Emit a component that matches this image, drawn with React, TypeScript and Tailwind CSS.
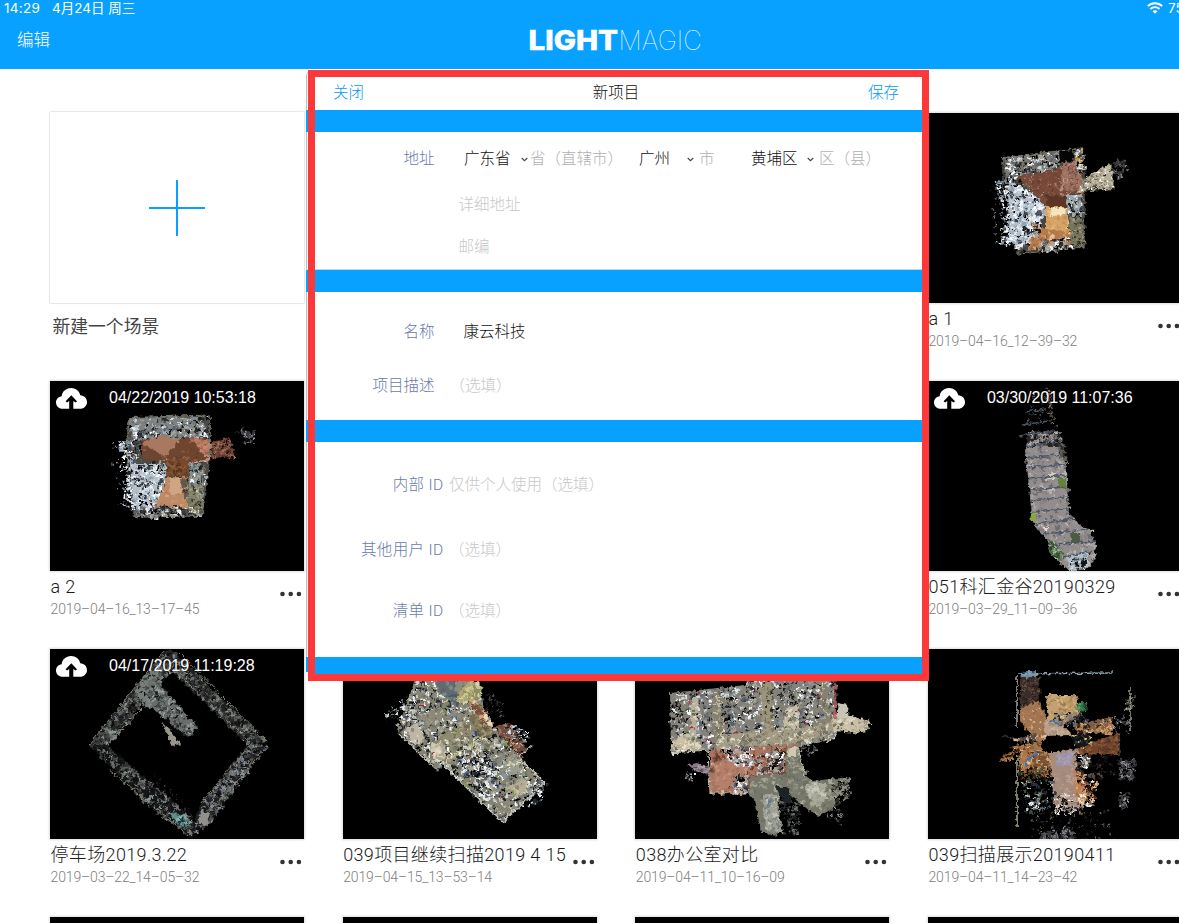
import React from 'react';

type Layer = {
  points: string;
  fill?: string;
  palette?: string[];
  count?: number;
  size?: number;
};

type Scan = {
  layers: Layer[];
  lines?: { d: string; stroke: string; width: number }[];
};

const CLUTTER = ['#e9eff6', '#cfd7de', '#14181c', '#000000', '#8996a2', '#56616d', '#f4f7fb', '#23282e', '#a8a596'];
const WHITE = ['#ffffff', '#e4edf6', '#bccada', '#000000', '#8fa0b0', '#f1f6fb', '#3a424c'];
const BROWN = ['#8a5a43', '#a3715a', '#5f3a2a', '#74493a', '#b58a76'];
const TAN = ['#d9aa72', '#b98052', '#e6c698', '#8e5c3a', '#c79363'];
const OLIVE = ['#77755c', '#8f8c74', '#4f5043', '#a3a08a', '#23251f'];
const CREAM = ['#cfc8ae', '#a9a48c', '#8d8973', '#dedac6', '#6d6a58'];
const STONE = ['#a9a4a3', '#bdb8b7', '#85807f', '#6e6b70', '#97918f'];
const CORRIDOR = ['#3d4042', '#5d6263', '#1d1f20', '#8b9593', '#0c0d0d', '#6d706c', '#484440'];
const DUST = ['#565656', '#8c8f94', '#3b3b3f'];

const scans: Record<string, Scan> = {
  a1: {
    layers: [
      { points: '74,44 155,34 156,134 89,142 80,87', fill: '#4a443f', palette: CLUTTER, count: 600, size: 1.8 },
      { points: '66,66 82,68 90,135 72,132 76,110', palette: WHITE, count: 220, size: 1.8 },
      { points: '59,70 78,66 80,130 66,134', palette: ['#b5bcc6', '#6f7884', '#ffffff'], count: 45, size: 1.2 },
      { points: '80,67 115,86 117,100 108,120 92,135 82,128', fill: '#b6c0ca', palette: WHITE, count: 400, size: 1.8 },
      { points: '76,44 130,39 132,60 80,66', fill: '#77776f', palette: CLUTTER, count: 280, size: 1.8 },
      { points: '88,63 120,58 155,45 155,80 136,82 138,95 120,95 102,76', fill: '#75493a', palette: BROWN, count: 300, size: 1.2 },
      { points: '135,50 153,48 155,76 132,78', fill: '#98705f', palette: ['#c59c8e', '#75483b', '#a97b6c'], count: 220, size: 1.2 },
      { points: '117,82 138,84 138,95 120,95', fill: '#5d3524' },
      { points: '117,94 140,94 140,120 117,119', fill: '#d5a468', palette: ['#e4c089', '#d09450', '#c68e58'], count: 40, size: 2 },
      { points: '122,95 138,95 137,102 123,103', fill: '#f4e5bf' },
      { points: '105,110 117,116 142,120 142,132 100,136', fill: '#b5794c', palette: TAN, count: 60, size: 2 },
      { points: '95,112 108,108 112,120 98,126', palette: CLUTTER, count: 60, size: 2 },
      { points: '110,127 142,124 143,134 112,136', palette: CLUTTER, count: 120, size: 2 },
      { points: '138,82 152,82 154,103 139,103', fill: '#9daaae', palette: CLUTTER, count: 50, size: 2 },
      { points: '141,105 154,104 156,134 142,132', fill: '#77755c', palette: OLIVE, count: 110, size: 1.3 },
      { points: '131,37 145,35 145,48 132,49', fill: '#050505' },
      { points: '146,36 155,35 156,60 148,58', palette: [...CLUTTER, '#c29b3c'], count: 70, size: 2 },
      { points: '157,65 183,50 186,76 150,79', fill: '#b9b09c', palette: [...CREAM, '#2b2824', '#ffffff'], count: 220, size: 1.2 },
      { points: '184,49 195,44 199,56 190,66 184,62', palette: DUST, count: 75, size: 1.4 },
    ],
    lines: [{ d: 'M75 86V45L155 35M156 60V134L90 141', stroke: '#77776a', width: 1 }],
  },
  a2: {
    layers: [
      { points: '77,36 158,34 160,79 152,136 83,136 80,89', fill: '#4c4945', palette: CLUTTER, count: 600, size: 1.8 },
      { points: '68,60 82,58 84,128 72,126 76,92', palette: WHITE, count: 200, size: 1.8 },
      { points: '60,60 80,58 80,128 66,126', palette: ['#b5bcc6', '#6f7884', '#ffffff'], count: 50, size: 1.2 },
      { points: '78,37 150,36 158,56 82,60', fill: '#7d8180', palette: CLUTTER, count: 300, size: 1.8 },
      { points: '80,83 116,83 116,102 106,128 84,128', fill: '#b4bfc8', palette: WHITE, count: 290, size: 1.8 },
      { points: '92,58 158,58 160,79 138,82 92,78', fill: '#70452f', palette: BROWN, count: 60, size: 2 },
      { points: '110,55 130,58 115,76 92,62', fill: '#a97860' },
      { points: '140,56 160,60 160,78 152,72', fill: '#bd7b5f', palette: ['#9c6652', '#c78a70'], count: 60, size: 1.5 },
      { points: '160,62 180,56 184,76 158,77', fill: '#6d4336', palette: ['#a77361', '#58382f', '#8f604f', '#140c0a'], count: 160, size: 1.4 },
      { points: '116,80 138,80 138,95 116,95', fill: '#78492b', palette: ['#4f3420', '#8d5b3a'], count: 28, size: 2 },
      { points: '116,96 138,96 138,128 103,128 112,112', fill: '#be8a65', palette: ['#c9976f', '#b58059', '#cfa681'], count: 50, size: 2 },
      { points: '120,97 133,97 131,112 120,114', fill: '#cfa684' },
      { points: '130,98 139,97 139,120 134,118', fill: '#68594a', palette: OLIVE, count: 35, size: 1.5 },
      { points: '139,84 151,83 151,104 139,104', fill: '#7f8c8b', palette: CLUTTER, count: 25, size: 2 },
      { points: '139,104 151,104 151,134 138,132', fill: '#85826b', palette: [...OLIVE, '#ded8c0'], count: 90, size: 1.6 },
      { points: '84,124 130,124 150,134 84,135', palette: CLUTTER, count: 170, size: 2 },
      { points: '192,42 197,50 206,48 202,60 196,62 190,52', palette: DUST, count: 60, size: 1.5 },
      { points: '184,50 192,44 208,60 196,66', palette: DUST, count: 16, size: 1 },
    ],
    lines: [
      { d: 'M78 88V37L157 34M84 135H152L153 84', stroke: '#7c7d70', width: 1.2 },
      { d: 'M160 36V78L139 83', stroke: '#b9b3a4', width: 1 },
    ],
  },
  stairs: {
    layers: [
      { points: '100,12 122,4 126,40 98,42', palette: ['#55504c', '#2b2a2a', '#736a62'], count: 45, size: 1.3 },
      { points: '118,8 122,8 128,52 122,50', palette: ['#8a7c70', '#55504c'], count: 45, size: 1.3 },
      { points: '100,50 132,50 136,72 97,72', fill: '#242324', palette: [...STONE, '#111111'], count: 170, size: 1.8 },
      { points: '97,66 135,66 139,99 140,132 152,144 162,149 168,166 162,186 142,190 125,176 119,159 105,142 102,116', fill: '#928d8c', palette: STONE, count: 420, size: 2.4 },
      { points: '128,60 135,60 137,80 131,74', palette: ['#1c1d1c', '#3d4238', '#645e58'], count: 40, size: 2 },
      { points: '119,158 129,162 136,178 130,180 121,170', fill: '#4d6845', palette: ['#6f9060', '#2c3b2a', '#a5b296'], count: 35, size: 1.8 },
      { points: '139,176 160,170 161,185 142,189', fill: '#b3bfc9', palette: ['#d3dde3', '#121517', '#8d9ba5'], count: 45, size: 2 },
      { points: '130,97 138,97 138,107 130,107', fill: '#64813d' },
      { points: '102,130 108,130 108,140 103,140', fill: '#87a83f' },
      { points: '142,152 152,152 152,162 143,162', fill: '#4d5b45' },
      { points: '121,92 127,92 127,98 121,98', fill: '#d6cbbf' },
      { points: '115,146 121,146 118,152', fill: '#e6dcd2' },
    ],
    lines: [
      {
        d: 'M96 31L118 28M94 44L120 40M91 55L127 50M97 65L133 61M99 77L135 73M100 87L137 83M101 98L138 94M101 109L138 106M102 120L140 116M104 131L140 128M108 143L148 138M114 153L160 149M125 164L168 160M135 176L164 170',
        stroke: '#4c5666',
        width: 1.5,
      },
    ],
  },
  parking: {
    layers: [
      { points: '113,4 130,10 55,98 39,96', fill: '#272a2a', palette: CORRIDOR, count: 560, size: 1.9 },
      { points: '113,3 122,1 217,93 200,98 120,20', fill: '#232525', palette: CORRIDOR, count: 520, size: 1.9 },
      { points: '217,96 198,95 150,155 140,187 156,176', fill: '#1c1d1f', palette: [...CORRIDOR, '#85899a'], count: 500, size: 1.9 },
      { points: '39,96 56,96 142,168 146,182 140,188 96,155', fill: '#151617', palette: CORRIDOR, count: 480, size: 1.9 },
      { points: '95,25 112,20 112,60 96,58 84,42', fill: '#757e79', palette: CORRIDOR, count: 90, size: 2 },
      { points: '97,32 112,38 147,78 138,88 122,76 102,58', fill: '#686e6b', palette: [...CORRIDOR, '#969e9e'], count: 220, size: 2 },
      { points: '112,74 120,80 130,95 122,97', fill: '#98958a' },
      { points: '119,163 135,166 140,177 128,176', fill: '#658c8b', palette: ['#8ab9b8', '#203536'], count: 30, size: 1.8 },
      { points: '151,164 160,164 156,177 149,174', fill: '#91908b' },
      { points: '100,120 140,160 144,166 120,165', palette: ['#343536', '#555555'], count: 25, size: 1 },
    ],
    lines: [
      {
        d: 'M39 96L113 3M56 97L107 43M121 18L200 93M130 4L217 93M200 96L150 155M215 102L158 164M58 120L138 187',
        stroke: '#85806f',
        width: 1,
      },
    ],
  },
  office39: {
    layers: [
      { points: '54,81 77,18 127,22 150,78 177,108 202,134 159,173 100,116 94,121', fill: '#85826f', palette: CLUTTER, count: 1600, size: 1.9 },
      { points: '40,66 58,50 76,34 60,82', palette: CLUTTER, count: 90, size: 1.6 },
      { points: '88,26 124,28 132,44 112,56 98,44', fill: '#606c71', palette: ['#495a66', '#7f898a', '#8d8d79'], count: 40, size: 3 },
      { points: '118,40 128,30 140,38 132,52 112,54', fill: '#aca775', palette: ['#c9c491', '#8f8b60', '#d6d1a8'], count: 50, size: 2.5 },
      { points: '78,68 92,58 100,68 84,78', fill: '#8d887b', palette: CREAM, count: 14, size: 2 },
      { points: '62,80 74,74 82,90 72,96', fill: '#bfb5a6', palette: CREAM, count: 14, size: 2 },
      { points: '98,88 122,70 132,84 108,102', fill: '#8f8b72', palette: CREAM, count: 40, size: 2.4 },
      { points: '86,96 98,92 104,104 94,116', fill: '#cfc8ae', palette: ['#e4dec6', '#a9a48c'], count: 25, size: 2.4 },
      { points: '124,62 140,66 152,84 140,92 130,78', fill: '#776d51', palette: ['#8e8464', '#5d563f', '#a39a7b'], count: 50, size: 2.4 },
      { points: '128,126 146,110 154,120 138,134', fill: '#6f6f5e', palette: [...OLIVE, ...CLUTTER], count: 50, size: 2 },
      { points: '114,106 140,88 150,98 128,116', palette: CREAM, count: 70, size: 2.2 },
      { points: '112,110 140,94 160,130 140,150', palette: CLUTTER, count: 260, size: 2 },
      { points: '162,112 172,104 180,122 170,126', fill: '#9b9d8f', palette: CREAM, count: 20, size: 2 },
      { points: '164,138 182,130 186,140 174,148', fill: '#b5ad96', palette: CREAM, count: 25, size: 2 },
      { points: '152,156 164,150 168,160 160,168', fill: '#858377', palette: CREAM, count: 14, size: 2 },
      { points: '122,48 134,52 150,76 140,72', palette: ['#d6a37e', '#f0d6b2', '#7d4f38'], count: 55, size: 2.2 },
      { points: '150,78 166,74 184,100 178,108', fill: '#6c4d40', palette: [...BROWN, '#101010', '#d9a07f'], count: 70, size: 2 },
      { points: '138,40 160,50 160,72 142,62', palette: ['#5a5f66', '#2b2d30'], count: 28, size: 1.5 },
      { points: '160,74 186,82 178,96 164,90', palette: CLUTTER, count: 80, size: 1.6 },
      { points: '184,142 204,134 196,154 182,156', palette: CLUTTER, count: 60, size: 1.7 },
      { points: '60,30 118,30 196,134 160,168 60,84', palette: ['#a92634', '#2946a1', '#7f9f3a'], count: 28, size: 1.8 },
    ],
    lines: [
      { d: 'M55 84L94 121M100 116L159 173L202 134M177 110L202 134M176 108L190 96', stroke: '#c8c8bd', width: 1.1 },
      { d: 'M100 114L140 88', stroke: '#cbc77f', width: 1.2 },
    ],
  },
  office38: {
    layers: [
      { points: '35,44 111,36 111,22 200,24 201,71 200,90 163,98 73,101 36,104', fill: '#858076', palette: CLUTTER, count: 1500, size: 1.9 },
      { points: '57,48 62,48 62,98 54,102', fill: '#b7b0a0', palette: CREAM, count: 30, size: 2 },
      { points: '78,44 86,44 88,98 79,100', fill: '#86806f', palette: CREAM, count: 50, size: 2 },
      { points: '126,34 136,34 138,88 128,90', fill: '#9d947c', palette: OLIVE, count: 45, size: 2 },
      { points: '150,60 163,56 166,86 148,88', fill: '#c3bba6', palette: CREAM, count: 50, size: 2 },
      { points: '184,30 192,30 196,72 184,76', fill: '#858074', palette: CREAM, count: 40, size: 2 },
      { points: '80,86 165,80 200,72 200,84 168,94 82,99', fill: '#a39b84', palette: [...CREAM, '#77766c'], count: 200, size: 2.2 },
      { points: '52,84 66,96 62,101 38,101 36,94', fill: '#cdc1a6', palette: [...CREAM, '#eee2c8'], count: 40, size: 2 },
      { points: '196,72 206,56 212,66 235,72 232,82 222,84 198,82', fill: '#cbc0a7', palette: CREAM, count: 70, size: 2 },
      { points: '203,54 213,56 211,68 204,70', fill: '#c8c4b6' },
      { points: '75,101 163,95 160,124 113,132 113,144 75,144', fill: '#a97460', palette: [...BROWN, '#c18b72', '#d2b6a5'], count: 250, size: 2.3 },
      { points: '80,112 106,110 112,124 98,130 90,142 80,134', fill: '#b47f6b', palette: ['#a56f5a', '#c69484', '#b5816a'], count: 50, size: 2.3 },
      { points: '86,98 118,98 116,118 96,114', palette: [...WHITE, '#b3a18f'], count: 130, size: 2 },
      { points: '122,106 148,98 150,124 122,128', palette: [...CLUTTER, '#684633'], count: 200, size: 2 },
      { points: '99,126 113,126 113,143 98,143', palette: CLUTTER, count: 110, size: 2 },
      { points: '52,116 62,114 73,118 73,126 60,122', fill: '#867886', palette: ['#b6a6ab', '#5c4e55'], count: 28, size: 1.6 },
      { points: '51,122 60,124 56,130 50,130', palette: CLUTTER, count: 24, size: 1.3 },
      { points: '151,98 163,98 170,126 178,132 213,128 213,148 196,160 183,168 170,158 160,150 146,142 143,158 148,184 126,184 120,151 113,144 114,128 150,124', fill: '#77786a', palette: ['#8a8b7b', '#6a6c60', '#787c72', '#aaa994', '#9b9a88'], count: 300, size: 2.4 },
      { points: '171,134 190,134 191,150 182,158 170,142', fill: '#a9aa9a', palette: ['#b9b9aa', '#9a9b8c', '#c8c8ba'], count: 40, size: 2.4 },
      { points: '154,98 163,98 161,108 152,108', fill: '#d0c9b1' },
      { points: '128,146 142,146 141,158 148,184 130,182', fill: '#9ea096', palette: ['#c1c4ba', '#7c8075', '#6b7a85'], count: 70, size: 1.8 },
      { points: '196,134 213,128 215,148 198,156', palette: ['#000000', '#2a2d29', '#908e80'], count: 140, size: 1.8 },
      { points: '143,142 165,156 162,184 156,184 146,164', palette: ['#000000', '#373d40', '#70706a', '#1f2222'], count: 140, size: 1.8 },
      { points: '141,138 152,138 158,150 150,156', fill: '#1c2326' },
      { points: '165,88 182,98 176,106 166,102', palette: DUST, count: 30, size: 1.5 },
      { points: '200,150 208,168 206,176 190,168', palette: DUST, count: 25, size: 1.5 },
      { points: '40,40 195,30 198,70 44,98', palette: ['#b32b3a', '#2c4c9e', '#37663f'], count: 32, size: 1.8 },
    ],
    lines: [
      { d: 'M200 34L200 70', stroke: '#b5444f', width: 1.2 },
      { d: 'M36 104L73 101L75 144L113 144M163 98L170 128', stroke: '#c9c4b4', width: 1 },
      { d: 'M150 98L151 123L114 127L114 140', stroke: '#754733', width: 1.2 },
    ],
  },
  display: {
    layers: [
      { points: '92,27 110,28 111,58 92,62', fill: '#3a2c28', palette: ['#5b443a', '#241b19', '#6f5547'], count: 130, size: 1.6 },
      { points: '92,60 110,52 118,68 132,92 108,92 92,72', fill: '#9f7553', palette: [...TAN, '#8e6446', '#a97b58'], count: 90, size: 1.6 },
      { points: '118,46 148,46 151,66 132,78 120,74', fill: '#c3a170', palette: ['#d6b886', '#b58d58', '#9c7c52'], count: 80, size: 2 },
      { points: '116,72 134,76 146,88 118,96', fill: '#b8a08a', palette: ['#cbb5a0', '#a58b74'], count: 40, size: 2 },
      { points: '120,64 152,62 158,72 150,80 130,76', palette: ['#3c3f46', '#6f747e', '#9c8b77', '#16181b'], count: 150, size: 1.7 },
      { points: '145,76 184,68 184,84 150,84', fill: '#7d604a', palette: [...TAN, '#2b2019'], count: 150, size: 1.6 },
      { points: '158,96 190,84 190,105 150,105 145,100', fill: '#70442b', palette: ['#8c5a3b', '#593623'], count: 90, size: 1.8 },
      { points: '82,98 112,92 118,104 110,116 92,122 90,104', fill: '#a8754a', palette: [...TAN, '#4c3422'], count: 90, size: 1.8 },
      { points: '70,110 92,98 90,106 76,113', fill: '#8a5c36', palette: ['#000000', '#b98049'], count: 50, size: 1.6 },
      { points: '73,86 90,90 110,84 108,92 88,92', fill: '#5e4b40', palette: ['#cdbba9', '#2c2420'], count: 30, size: 1.6 },
      { points: '106,103 124,103 122,122 106,122', fill: '#735034', palette: TAN, count: 60, size: 1.6 },
      { points: '90,116 120,118 124,128 92,132', palette: ['#7b4e2d', '#3c4f38', '#a96f41', '#20160f'], count: 120, size: 1.7 },
      { points: '122,103 150,100 148,118 150,158 126,158', fill: '#a78c7e', palette: ['#b69c8b', '#9d857d', '#baa493'], count: 90, size: 2 },
      { points: '128,106 146,102 142,116 130,118', fill: '#a298ae', palette: ['#b0a5b3', '#9a8fae'], count: 20, size: 2 },
      { points: '146,120 156,124 156,156 148,156', fill: '#b98055', palette: TAN, count: 45, size: 2 },
      { points: '126,145 150,145 156,164 122,166', palette: ['#f4efe9', '#c6b9ae', '#8e8178', '#000000'], count: 190, size: 1.4 },
      { points: '140,86 162,84 162,96 148,98', fill: '#14161a', palette: ['#3a4250', '#d8c060', '#0b0c0e'], count: 28, size: 2 },
      { points: '112,98 119,87 142,86 147,98 130,103 116,103', fill: '#000000' },
      { points: '152,106 160,106 160,118 152,117', palette: ['#ffffff', '#d5dadb', '#78817e'], count: 50, size: 2 },
      { points: '145,104 180,106 186,126 148,132', palette: ['#241f1d', '#55493f', '#0d0d0d'], count: 70, size: 2 },
      { points: '150,132 168,132 166,156 152,156', palette: [...TAN, '#e8ecec', '#8d3c2c', '#000000'], count: 110, size: 1.9 },
      { points: '92,132 126,130 126,160 96,165', palette: ['#2b3440', '#57616d', '#10151b', '#c0c8c8', '#3c4f38'], count: 100, size: 1.8 },
      { points: '100,152 116,150 116,162 102,162', palette: ['#eef0f0', '#606a70', '#000000'], count: 60, size: 1.8 },
      { points: '100,168 186,160 188,190 104,190', palette: ['#23282c', '#4d555b', '#736657'], count: 70, size: 1.6 },
      { points: '112,182 128,180 130,190 112,190', palette: DUST, count: 60, size: 1.8 },
      { points: '133,176 140,176 146,190 132,190', palette: DUST, count: 50, size: 1.8 },
      { points: '190,110 206,110 205,128 192,132', palette: DUST, count: 90, size: 1.8 },
      { points: '190,142 200,142 198,158 190,158', palette: DUST, count: 50, size: 1.8 },
      { points: '198,48 206,46 204,58 196,62', palette: ['#b9bda8', '#6d705f'], count: 30, size: 1.5 },
      { points: '186,66 202,66 200,84 184,84', palette: DUST, count: 40, size: 1.4 },
      { points: '148,54 158,54 158,62 150,62', fill: '#32734a', palette: ['#59a36e', '#1a3521'], count: 20, size: 1.6 },
      { points: '92,24 108,22 108,28 93,28', fill: '#6b8ba8' },
    ],
    lines: [
      { d: 'M90 25L184 24', stroke: '#8ba3ac', width: 1.4 },
      { d: 'M89 26V80M89 108V178', stroke: '#b5b29f', width: 1.4 },
      { d: 'M202 39V82', stroke: '#a3a791', width: 1.4 },
      { d: 'M191 86V106', stroke: '#7a6755', width: 1 },
      { d: 'M122 72L132 74M98 118V110L108 106V100', stroke: '#3f73b9', width: 2 },
    ],
  },
};

function createRandom(seed: number) {
  let state = seed;
  return () => {
    state = (state * 1664525 + 1013904223) >>> 0;
    return state / 4294967296;
  };
}

function inside(x: number, y: number, poly: number[][]) {
  let hit = false;
  for (let i = 0, j = poly.length - 1; i < poly.length; j = i++) {
    const [xi, yi] = poly[i];
    const [xj, yj] = poly[j];
    if (yi > y !== yj > y && x < ((xj - xi) * (y - yi)) / (yj - yi) + xi) hit = !hit;
  }
  return hit;
}

// Neighbouring specks tend to share a colour, so the cloud forms small clumps.
function cellIndex(x: number, y: number, length: number) {
  const v = Math.sin(Math.floor(x / 4.5) * 127.1 + Math.floor(y / 4) * 311.7) * 43758.5453;
  return Math.floor((v - Math.floor(v)) * length);
}

function speckles(layer: Layer, seed: number) {
  const palette = layer.palette ?? [];
  const paths = palette.map(() => '');
  const poly = layer.points.split(' ').map((p) => p.split(',').map(Number));
  const xs = poly.map((p) => p[0]);
  const ys = poly.map((p) => p[1]);
  const [x0, x1, y0, y1] = [Math.min(...xs), Math.max(...xs), Math.min(...ys), Math.max(...ys)];
  const random = createRandom(seed);
  let placed = 0;
  for (let tries = 0; placed < (layer.count ?? 0) && tries < 12000; tries++) {
    const x = x0 + random() * (x1 - x0);
    const y = y0 + random() * (y1 - y0);
    if (!inside(x, y, poly)) continue;
    const w = (layer.size ?? 2) * (0.5 + random() * 1.2);
    const h = (layer.size ?? 2) * (0.5 + random());
    const k = random() < 0.55 ? cellIndex(x, y, palette.length) : Math.floor(random() * palette.length);
    paths[k] += `M${x.toFixed(1)} ${y.toFixed(1)}h${w.toFixed(1)}v${h.toFixed(1)}h${(-w).toFixed(1)}z`;
    placed++;
  }
  return palette.map((color, i) => <path key={i} d={paths[i]} fill={color} />);
}

function PointCloud({ name }: { name: string }) {
  const scan = scans[name];
  return (
    <svg className="block h-full w-full" viewBox="0 0 254 190" aria-hidden="true">
      <filter id={`rough-${name}`} x="0" y="0" width="254" height="190" filterUnits="userSpaceOnUse" colorInterpolationFilters="sRGB">
        <feTurbulence type="fractalNoise" baseFrequency="0.25" numOctaves="3" seed="4" result="noise" />
        <feDisplacementMap in="SourceGraphic" in2="noise" scale="5.5" xChannelSelector="R" yChannelSelector="G" />
      </filter>
      <g filter={`url(#rough-${name})`}>
        {scan.layers.map((layer, i) => (
          <g key={i}>
            {layer.fill && <polygon points={layer.points} fill={layer.fill} />}
            {speckles(layer, 97 + i * 7919)}
          </g>
        ))}
        {scan.lines?.map((line, i) => (
          <path key={i} d={line.d} stroke={line.stroke} strokeWidth={line.width} fill="none" />
        ))}
      </g>
    </svg>
  );
}

function CloudUp() {
  return (
    <svg className="h-[21px] w-[31px]" viewBox="0 0 31 21" aria-hidden="true">
      <path
        d="M6.5 20.8C2.9 20.8 0 18 0 14.500 0 11.300 2.400 8.700 5.700 8.300 6 3.600 10 0 15 0c4.700 0 8.300 3 9.300 7.300 3.800.3 6.700 3.100 6.700 6.700 0 3.800-3 6.800-6.900 6.800z"
        fill="#fff"
      />
      <path d="M15.300 7.200L21 13.300 19.500 14.500 17.300 13V21H13.200V13L11.100 14.500 9.600 13.300z" fill="#000" />
    </svg>
  );
}

function Dots() {
  return (
    <svg className="h-[6px] w-[22px] shrink-0" viewBox="0 0 22 6" aria-hidden="true">
      <circle cx="2.500" cy="3" r="2.300" fill="#333" />
      <circle cx="10.700" cy="3" r="2.300" fill="#333" />
      <circle cx="18.900" cy="3" r="2.300" fill="#333" />
    </svg>
  );
}

type CardProps = { scan?: string; title?: string; date?: string; stamp?: string; column?: string };

function SceneCard({ scan, title, date, stamp, column = '' }: CardProps) {
  return (
    <article className={`h-[268px] w-[254px] ${column}`}>
      <div className="relative h-[190px] bg-black shadow-[0_0_2px_1px_rgba(0,0,0,0.14)]">
        {scan && <PointCloud name={scan} />}
        {stamp && (
          <div className="absolute inset-x-0 top-[7px] flex items-center pl-[6px]">
            <CloudUp />
            <time className="-mt-px ml-[22px] text-[16px] leading-[20px] text-white">{stamp}</time>
          </div>
        )}
      </div>
      {title && (
        <div className="flex justify-between">
          <div className="whitespace-nowrap pl-[0.500px] pt-[4px] font-['Roboto','Noto_Sans_CJK_SC',sans-serif] font-light">
            <h2 className="text-[18px] leading-[23px] tracking-[0.350px] text-[#1a1a1a]">{title}</h2>
            <p className="mt-px text-[14px] leading-[20px] tracking-[-0.130px] text-[#808080]">{date}</p>
          </div>
          <div className="-ml-4 mr-[2px] pt-[20px]">
            <Dots />
          </div>
        </div>
      )}
    </article>
  );
}

function Chevron() {
  return (
    <svg className="h-[5px] w-[7px] shrink-0" viewBox="0 0 7 5" aria-hidden="true">
      <path d="M.7 1l2.800 2.700L6.300 1" fill="none" stroke="#444" strokeWidth="1.100" />
    </svg>
  );
}

function Field({ label, height, wide, children }: { label?: string; height: string; wide?: boolean; children: React.ReactNode }) {
  return (
    <div className={`flex items-center whitespace-nowrap ${height}`}>
      <span className={`shrink-0 text-right text-[#6a7aab] ${wide ? 'w-[137.500px] tracking-[0.350px]' : 'w-[128.500px]'}`}>{label}</span>
      {children}
    </div>
  );
}

function Band({ height = 'h-[22px]' }: { height?: string }) {
  return <div className={`bg-[#08a1ff] ${height}`} />;
}

function ProjectDialog() {
  return (
    <section className="absolute left-[306px] top-[70px] h-[611px] w-[623px] font-['Roboto','Noto_Sans_CJK_SC',sans-serif] text-[15.500px] font-light leading-[22px]">
      <div className="flex h-[602px] flex-col rounded-tl-[6px] bg-white shadow-[inset_1px_0_1px_rgba(0,0,0,0.28)]">
        <header className="flex h-[40px] items-center justify-between pl-[27px] pr-[30px] pt-[6px] text-[#0098f5]">
          <button>关闭</button>
          <h1 className="text-[#111]">新项目</h1>
          <button>保存</button>
        </header>
        <Band />
        <div className="h-[138px] border-b border-[#b5daf2]">
          <Field label="地址" height="h-[52px] pt-[2px]">
            <span className="ml-[29.500px] w-[57px] text-[#111]">广东省</span>
            <Chevron />
            <span className="ml-[2px] w-[109px] text-[#b0b0b0]">省（直辖市）</span>
            <span className="w-[48px] text-[#111]">广州</span>
            <Chevron />
            <span className="ml-[5px] w-[52px] text-[#b0b0b0]">市</span>
            <span className="w-[56px] text-[#111]">黄埔区</span>
            <Chevron />
            <span className="ml-[5px] text-[#b0b0b0]">区（县）</span>
          </Field>
          <Field height="h-[41px] pt-px">
            <span className="ml-[24px] text-[#c8c8c8]">详细地址</span>
          </Field>
          <Field height="h-[42px] pt-[2px]">
            <span className="ml-[24px] text-[#c8c8c8]">邮编</span>
          </Field>
        </div>
        <Band />
        <div className="h-[128px] pt-[14px]">
          <Field label="名称" height="h-[51px] pt-px">
            <span className="ml-[29px] text-[#111]">康云科技</span>
          </Field>
          <Field label="项目描述" height="h-[56px] pt-[2px]">
            <span className="ml-[15px] text-[#c8c8c8]">（选填）</span>
          </Field>
        </div>
        <Band />
        <div className="h-[215px] pt-[12px]">
          <Field label="内部 ID" height="h-[61px] pt-px" wide>
            <span className="ml-[5.500px] text-[#c8c8c8]">仅供个人使用（选填）</span>
          </Field>
          <Field label="其他用户 ID" height="h-[68px] pt-[2px]" wide>
            <span className="ml-[5.500px] text-[#c8c8c8]">（选填）</span>
          </Field>
          <Field label="清单 ID" height="h-[54px] pt-[2px]" wide>
            <span className="ml-[5.500px] text-[#c8c8c8]">（选填）</span>
          </Field>
        </div>
        <Band height="h-[15px]" />
      </div>
      <div className="ml-[2px] h-[3px] bg-[#08a1ff]" />
      <div className="absolute inset-y-0 left-[2px] right-0 border-[7px] border-[#fd3838]" />
    </section>
  );
}

export default function App() {
  return (
    <main className="relative h-[923px] w-[1179px] overflow-hidden bg-white font-['Liberation_Sans','Noto_Sans_CJK_SC',sans-serif]">
      <header className="h-[69px] bg-[#08a1ff] text-white">
        <div className="flex h-[16px] items-center justify-between whitespace-nowrap pl-[4px] font-['Inter','Noto_Sans_CJK_SC',sans-serif] text-[13.500px] leading-[16px]">
          <div className="flex">
            <span className="w-[48px] tracking-[0.300px]">14:29</span>
            <span>4月24日 周三</span>
          </div>
          <div className="flex w-[32px] items-center">
            <svg className="mr-[5px] h-[12px] w-[16px] shrink-0" viewBox="0 0 16 12" aria-hidden="true">
              <g fill="none" stroke="#fff" strokeWidth="1.900">
                <path d="M.8 4.200C4.800.2 11.200.2 15.200 4.200" />
                <path d="M3.400 7C6 4.500 10 4.500 12.600 7" />
              </g>
              <path d="M8 11.800L5.500 9.200c1.400-1.300 3.600-1.300 5 0z" fill="#fff" />
            </svg>
            <span>75</span>
          </div>
        </div>
        <div className="flex h-[48px] items-center">
          <button className="w-[529px] pl-[17px] text-left text-[16.500px] font-light leading-[24px]">编辑</button>
          <svg className="h-[30px] w-[176px] font-['Inter',sans-serif]" viewBox="0 0 176 30" fill="#fff">
            <text x="-0.500" y="24.500" fontSize="27" fontWeight="800" textLength="89.500" lengthAdjust="spacingAndGlyphs" stroke="#fff" strokeWidth="0.500">
              LIGHT
            </text>
            <text x="89.500" y="24.500" fontSize="27" fontWeight="100" textLength="83.500" lengthAdjust="spacingAndGlyphs">
              MAGIC
            </text>
          </svg>
        </div>
      </header>
      <div className="grid w-[1132px] grid-cols-[repeat(4,254px)] gap-x-[38.670px] pl-[50px] pt-[44px]">
        <article className="h-[268px] w-[254px]">
          <div className="-mt-px flex h-[191px] items-center justify-center rounded-[1px] shadow-[0_0_1px_1px_rgba(0,0,0,0.1)]">
            <svg className="h-[56px] w-[56px]" viewBox="0 0 56 56" aria-hidden="true">
              <path d="M0 28H56M28 0V56" stroke="#08a1ff" strokeWidth="2" />
            </svg>
          </div>
          <h2 className="pl-[2.500px] pt-[12px] text-[17.800px] leading-[24px] text-[#444]">新建一个场景</h2>
        </article>
        <SceneCard column="col-start-4" scan="a1" title="a 1" date="2019–04–16_12–39–32" />
        <SceneCard scan="a2" title="a 2" date="2019–04–16_13–17–45" stamp="04/22/2019 10:53:18" />
        <SceneCard column="col-start-4" scan="stairs" title="051科汇金谷20190329" date="2019–03–29_11–09–36" stamp="03/30/2019 11:07:36" />
        <SceneCard scan="parking" title="停车场2019.3.22" date="2019–03–22_14–05–32" stamp="04/17/2019 11:19:28" />
        <SceneCard scan="office39" title="039项目继续扫描2019 4 15" date="2019–04–15_13–53–14" />
        <SceneCard scan="office38" title="038办公室对比" date="2019–04–11_10–16–09" />
        <SceneCard scan="display" title="039扫描展示20190411" date="2019–04–11_14–23–42" />
        <SceneCard />
        <SceneCard />
        <SceneCard />
        <SceneCard />
      </div>
      <ProjectDialog />
    </main>
  );
}
